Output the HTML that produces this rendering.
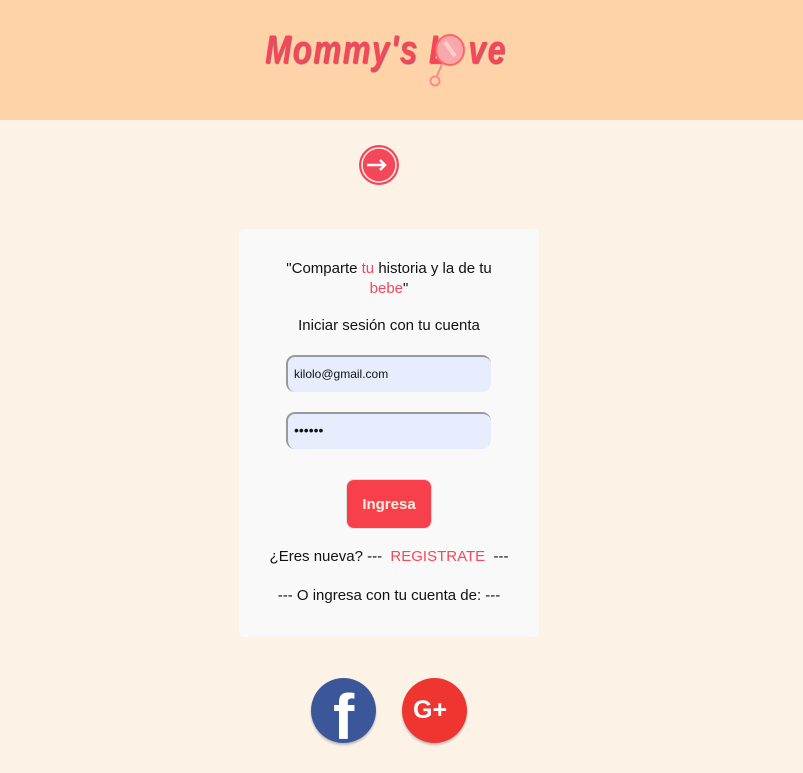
<!DOCTYPE html>
<html><head><meta charset="utf-8"><style>
*{margin:0;padding:0;box-sizing:border-box}
body{width:803px;height:773px;background:#fdf2e6;font-family:"Liberation Sans",sans-serif;position:relative;overflow:hidden}
.hdr{position:absolute;left:0;top:0;width:803px;height:120px;background:#fed3a8}
.logo{position:absolute;top:26px;font:italic bold 40px "Liberation Sans",sans-serif;color:#f5475a;text-shadow:1px 1px 1px #a0606a;letter-spacing:2px;white-space:nowrap;transform-origin:left;line-height:48px}
.card{position:absolute;left:239px;top:229px;width:300px;height:408px;background:#f9f9f9;border-radius:5px}
.t{position:absolute;width:300px;left:0;text-align:center;font-size:15px;color:#111}
.r{color:#f5475a}
.in{position:absolute;left:47px;width:205px;height:37px;background:#e7edfc;border-radius:9px;border-top:2px solid #999;border-left:2px solid #999;font-size:12px;padding:10px 0 0 6px;color:#111}
.btn{position:absolute;left:107px;top:250px;width:86px;height:50px;background:#f8404c;border-radius:8px;color:#fef0e0;font-weight:bold;font-size:15px;text-align:center;line-height:50px;border:1px solid #ddd}
.soc{position:absolute;top:678px;width:65px;height:65px;border-radius:50%;box-shadow:0 2px 2px #bbb;overflow:hidden}
</style></head><body>
<div class="hdr"></div>
<div class="logo" style="left:265px;transform:scaleX(0.78)">Mommy's L</div>
<div class="logo" style="left:468px;transform:scaleX(0.8)">ve</div>
<svg style="position:absolute;left:425px;top:34px" width="48" height="58"><ellipse cx="25" cy="16" rx="14" ry="15" fill="#f7a8aa" stroke="#f66" stroke-width="2"/><path d="M20 8l10 14" stroke="#fcc" stroke-width="4"/><line x1="17" y1="30" x2="12" y2="42" stroke="#f88" stroke-width="2"/><circle cx="10" cy="47" r="4.5" fill="none" stroke="#f88" stroke-width="2"/></svg>
<svg style="position:absolute;left:358px;top:144px" width="42" height="42"><circle cx="21" cy="21" r="20" fill="#f5475a"/><circle cx="21" cy="21" r="17" fill="none" stroke="#fdf2e6" stroke-width="1.5"/><path d="M9 21h18M22 16l5 5-5 5" stroke="#fff" stroke-width="2.5" fill="none"/></svg>
<div class="card">
<div class="t" style="top:30px;line-height:20px">"Comparte <span class="r">tu</span> historia y la de tu<br><span class="r">bebe</span>"</div>
<div class="t" style="top:88px">Iniciar sesión con tu cuenta</div>
<div class="in" style="top:126px">kilolo@gmail.com</div>
<div class="in" style="top:183px;font-size:14px;padding-top:8px">••••••</div>
<div class="btn">Ingresa</div>
<div class="t" style="top:319px">¿Eres nueva? --- &nbsp;<span class="r">REGISTRATE</span> &nbsp;---</div>
<div class="t" style="top:358px">--- O ingresa con tu cuenta de: ---</div>
</div>
<div class="soc" style="left:311px;background:#3b5699"><span style="position:absolute;left:22px;top:4px;color:#fff;font:bold 64px 'Liberation Sans',sans-serif;line-height:70px">f</span></div>
<div class="soc" style="left:402px;background:#ee3530"><span style="position:absolute;left:11px;top:18px;color:#fff;font:bold 25px 'Liberation Sans',sans-serif">G+</span></div>
</body></html>
